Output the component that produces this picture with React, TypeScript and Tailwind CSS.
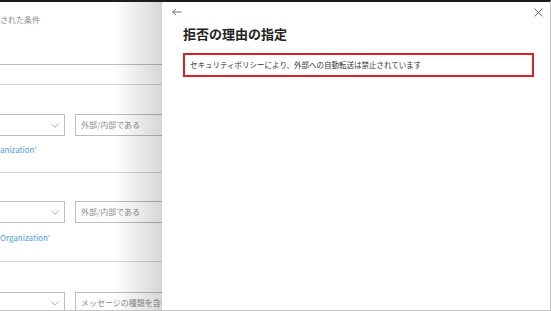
import React from "react";

const jp = { fontFamily: '"Noto Sans CJK JP", "Noto Sans", sans-serif' };

function Chevron() {
  return (
    <svg width="8" height="5" viewBox="0 0 8 5" className="shrink-0">
      <path d="M0.5 0.8 L4 4.2 L7.5 0.8" fill="none" stroke="#a0a0a0" strokeWidth="0.9" />
    </svg>
  );
}

function Row({ text }: { text: string }) {
  return (
    <div className="flex gap-[10px] h-[22px] -ml-[2px]">
      <div className="w-[67px] shrink-0 border border-[#bdbdbd] flex items-center justify-end pr-[5px]">
        <Chevron />
      </div>
      <div className="w-[120px] shrink-0 border border-[#bdbdbd] flex items-center pl-[5px] text-[8px] leading-[12px] text-[#8a8a8a] whitespace-nowrap overflow-hidden">
        {text}
      </div>
    </div>
  );
}

export default function App() {
  return (
    <div
      className="w-[551px] h-[311px] bg-white border-t-2 border-t-[#1c1c1c] border-r border-r-[#c4c4c4] border-b border-b-[#c4c4c4] flex overflow-hidden"
      style={jp}
    >
      {/* Left, dimmed background panel */}
      <div className="w-[162px] h-full shrink-0 relative overflow-hidden">
        <div className="flex flex-col">
          <div className="pt-[12px] text-[8px] leading-[12px] text-[#8a8a8a] whitespace-nowrap">された条件</div>
          <div className="mt-[38px] h-[21px] -ml-[2px] w-[200px] border border-[#bdbdbd] border-b-[#d6d6d6]" />
          <div className="mt-[29px]">
            <Row text="外部/内部である" />
          </div>
          <div className="mt-[8px] text-[8px] leading-[12px] text-[#4f9bd8] whitespace-nowrap">anization'</div>
          <div className="mt-[16px] h-px bg-[#d6d6d6]" />
          <div className="mt-[28px]">
            <Row text="外部/内部である" />
          </div>
          <div className="mt-[9px] text-[8px] leading-[12px] text-[#4f9bd8] whitespace-nowrap">Organization'</div>
          <div className="mt-[17px] h-px bg-[#d6d6d6]" />
          <div className="mt-[30px]">
            <Row text="メッセージの種類を含む" />
          </div>
        </div>
        <div className="absolute inset-y-0 right-0 w-[48px] bg-linear-to-r from-transparent to-[rgba(0,0,0,0.16)]" />
      </div>

      {/* Right flyout panel */}
      <div className="flex-1 h-full bg-white flex flex-col">
        <div className="h-[18px] pt-[2px] flex items-center justify-between pl-[10px] pr-[7px]">
          <svg width="10" height="8" viewBox="0 0 10 8">
            <path d="M9.5 4 H1 M4 0.8 L0.8 4 L4 7.2" fill="none" stroke="#5a5a5a" strokeWidth="0.9" />
          </svg>
          <svg width="9" height="9" viewBox="0 0 9 9">
            <path d="M0.5 0.5 L8.5 8.5 M8.5 0.5 L0.5 8.5" fill="none" stroke="#5a5a5a" strokeWidth="0.9" />
          </svg>
        </div>
        <div className="mt-[6px] pl-[21px] text-[13px] leading-[16px] font-bold text-[#222222] whitespace-nowrap">
          拒否の理由の指定
        </div>
        <div className="mt-[11px] ml-[21px] w-[351px] h-[24px] border-2 border-[#d7202a] flex items-center pl-[5px] text-[7.5px] leading-[12px] text-[#333333] whitespace-nowrap">
          セキュリティポリシーにより、外部への自動転送は禁止されています
        </div>
      </div>
    </div>
  );
}
